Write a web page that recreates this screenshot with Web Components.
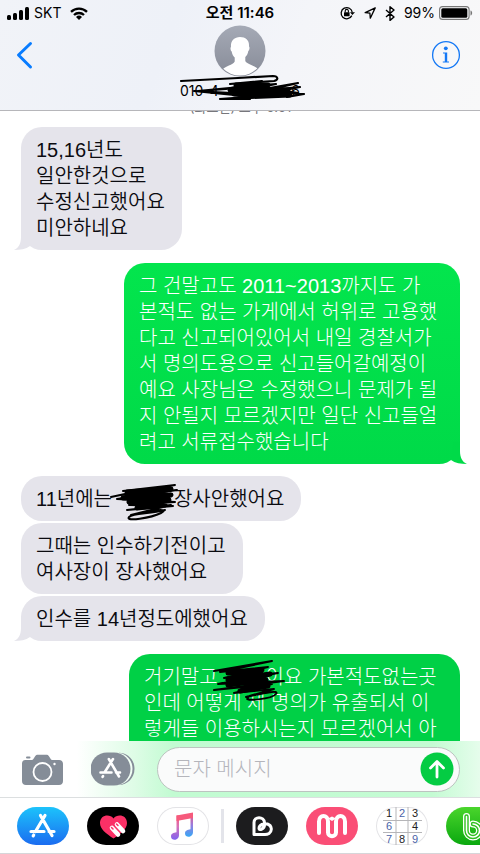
<!DOCTYPE html>
<html lang="ko">
<head>
<meta charset="utf-8">
<meta name="viewport" content="width=device-width, initial-scale=1">
<title>문자 메시지</title>
<style>
  html, body { height: 100%; }
  body {
    margin: 0;
    background: #fff;
    color: #0b0b10;
    font-family: Inter, "Noto Sans CJK KR", sans-serif;
  }
</style>
</head>
<body>
<phone-screen>
  <chat-header slot="header">
    <status-bar slot="status" carrier="SKT" time="오전 11:46" battery="99%"></status-bar>
  </chat-header>
  <chat-stamp>(화요일) 오후 5:51</chat-stamp>
  <chat-bubble tail gap="none">15,16년도<br>일안한것으로<br>수정신고했어요<br>미안하네요</chat-bubble>
  <chat-bubble sent tail>그 건말고도 2011~2013까지도 가<br>본적도 없는 가게에서 허위로 고용했<br>다고 신고되어있어서 내일 경찰서가<br>서 명의도용으로 신고들어갈예정이<br>예요 사장님은 수정했으니 문제가 될<br>지 안될지 모르겠지만 일단 신고들얼<br>려고 서류접수했습니다</chat-bubble>
  <chat-bubble gap="turn">11년에는<ink-scribble kind="a"></ink-scribble>장사안했어요</chat-bubble>
  <chat-bubble gap="tight">그때는 인수하기전이고<br>여사장이 장사했어요</chat-bubble>
  <chat-bubble tail gap="tight">인수를 14년정도에했어요</chat-bubble>
  <chat-bubble sent deep>거기말고<ink-scribble kind="b"></ink-scribble>이요 가본적도없는곳<br>인데 어떻게 제 명의가 유출되서 이<br>렇게들 이용하시는지 모르겠어서 아<br>직도</chat-bubble>
  <message-compose slot="compose"></message-compose>
  <app-drawer slot="apps"></app-drawer>
</phone-screen>

<script>
function element(name, html) {
  customElements.define(name, class extends HTMLElement {
    constructor() {
      super();
      const t = document.createElement('template');
      t.innerHTML = html;
      this.attachShadow({ mode: 'open' }).append(t.content.cloneNode(true));
    }
    connectedCallback() {
      this.shadowRoot.querySelectorAll('[data-attr]').forEach(n => {
        n.textContent = this.getAttribute(n.dataset.attr) || '';
      });
    }
  });
}

element('phone-screen', `
<style>
  :host { display: flex; flex-direction: column; height: 100vh; overflow: hidden; }
  main { flex: 1; min-height: 0; overflow: hidden; display: flex; flex-direction: column; padding: 0 20px 0 21px; }
</style>
<slot name="header"></slot>
<main><slot></slot></main>
<slot name="compose"></slot>
<slot name="apps"></slot>`);

element('status-bar', `
<style>
  :host { display: grid; grid-template-columns: 1fr auto 1fr; align-items: center; height: 26px; padding: 0 7px; font-size: 14px; line-height: 20px; color: #000; }
  div { display: flex; align-items: center; }
  .end { justify-content: flex-end; gap: 9px; }
  .start { gap: 5px; }
  time { font-weight: 600; font-size: 15px; }
  .wifi { margin-left: 4px; }
  .battery { margin-left: -5px; }
  svg { display: block; flex: none; }
</style>
<div class="start">
  <svg width="22" height="13" viewBox="0 0 22 13"><rect y="8" width="4" height="5" rx="1.5"/><rect x="6" y="6" width="4" height="7" rx="1.5"/><rect x="12" y="3" width="4" height="10" rx="1.5"/><rect x="18" width="4" height="13" rx="1.5"/></svg>
  <span data-attr="carrier"></span>
  <svg class="wifi" width="18" height="13" viewBox="0 0 18 13"><g fill="none" stroke="#000" stroke-width="2.3"><path d="M1 4.9a11.4 11.4 0 0 1 16 0"/><path d="M4 8a7.2 7.2 0 0 1 10 0"/></g><path d="M9 13 6 10a4.3 4.3 0 0 1 6 0z"/></svg>
</div>
<time data-attr="time"></time>
<div class="end">
  <svg width="15" height="14" viewBox="0 0 15 14"><path d="M11.8 9.6A5.6 5.6 0 1 1 12.3 6.5" fill="none" stroke="#000" stroke-width="1.3"/><path d="M10 6.2h5L12.4 9z"/><rect x="4" y="6.2" width="5.6" height="4" rx=".5"/><path d="M5.2 6.5V5a1.6 1.6 0 0 1 3.2 0v1.5" fill="none" stroke="#000" stroke-width="1.1"/></svg>
  <svg width="12" height="12" viewBox="0 0 12 12"><path d="M11.2.9 1.2 5.7l4.7.5.4 5z" fill="none" stroke="#000" stroke-width="1.3" stroke-linejoin="round"/></svg>
  <svg width="10" height="15" viewBox="0 0 10 15"><path d="M1 4l8 7-4 3.4V.7L9 4l-8 7" fill="none" stroke="#000" stroke-width="1.4" stroke-linejoin="round"/></svg>
  <span data-attr="battery"></span>
  <svg class="battery" width="34" height="14" viewBox="0 0 34 14"><rect x=".6" y=".6" width="29.5" height="12.8" rx="3" fill="none" stroke="#777" stroke-width="1.1"/><rect x="2.3" y="2.3" width="26" height="9.4" rx="1.5"/><path d="M31.5 4.5c2.2.5 2.2 4.500 0 5z" fill="#777"/></svg>
</div>`);

element('chat-header', `
<style>
  :host { display: block; border-bottom: 1px solid #b6b6ba; background: linear-gradient(110deg, #f1f3f8, #eef1f8 35%, #f4f5f9 60%, #f8f8f9); }
  nav { display: grid; grid-template-columns: 1fr auto 1fr; height: 84px; padding: 0 15px; }
  button { all: unset; cursor: pointer; display: block; height: 30px; margin-top: 14px; }
  .info { justify-self: end; margin-right: 4px; }
  svg { display: block; overflow: visible; }
  .who { display: grid; justify-items: center; align-content: start; position: relative; width: 124px; }
  .num { display: flex; justify-content: space-between; width: 120px; font-size: 14px; line-height: 18px; margin: 4px 0 0; font-weight: 400; color: #000; }
  .ink { position: absolute; left: 0; top: 46px; }
</style>
<slot name="status"></slot>
<nav>
  <button aria-label="뒤로"><svg width="20" height="30" viewBox="0 0 20 30"><path d="M15.500 3.500 3.500 15l12 12" fill="none" stroke="#087cff" stroke-width="3" stroke-linecap="round" stroke-linejoin="round"/></svg></button>
  <div class="who">
    <svg width="52" height="52" viewBox="0 0 52 52"><defs><linearGradient id="g" x1="0" y1="0" x2="0" y2="1"><stop offset="0" stop-color="#a5aab6"/><stop offset="1" stop-color="#878b97"/></linearGradient><clipPath id="c"><circle cx="26" cy="25" r="24.500"/></clipPath></defs><circle cx="26" cy="25" r="25.500" fill="url(#g)"/><path clip-path="url(#c)" d="M26 11c-6 0-9.500 4-9 10-.9.6-.6 3.500.7 4.500.4 3.200 1.700 4.600 3 6v4c-1.500 3.500-9.700 4.500-12.700 8.500L14 52h26l4.500-8.500c-3-4-11.700-5-13.200-8.500v-4c1.300-1.400 2.600-2.800 3-6 1.300-1 1.600-3.900.7-4.500.5-6-3-9.500-9-9.500z" fill="#fff"/></svg>
    <h1 class="num"><span>010-4</span><span>6</span></h1>
    <svg class="ink" width="128" height="32" viewBox="0 0 128 32" fill="none" stroke="#000" stroke-linecap="round" stroke-linejoin="round"><path stroke-width="2.200" d="M3 9 60 6l35-2c5 0 6 4 1 5L52 12 84 9 48 17 20 19 62 15 98 12 54 21 16 19 66 24 110 22 42 27 72 27M70 20l50-9-30 7 32-3-25 5 29 2-17 3M84 15l36 6"/><path stroke-width="5" d="M58 13 90 13 52 18 110 18 56 22 112 23 62 25"/></svg>
  </div>
  <button class="info" aria-label="정보"><svg width="30" height="30" viewBox="0 0 30 30" fill="#1478f5"><circle cx="15" cy="15" r="13.400" fill="none" stroke="#1478f5" stroke-width="1.300"/><circle cx="14.800" cy="8.300" r="1.900"/><path d="M12 12.500h4.200v9h1.800v1h-6.200v-1h2v-8H12z"/></svg></button>
</nav>`);

element('chat-stamp', `
<style>
  :host { display: block; flex: none; height: 16px; text-align: center; font-size: 13px; line-height: 16px; color: #77777c; }
  p { margin: -12px 0 0; }
</style>
<p><slot></slot></p>`);

element('chat-bubble', `
<style>
  :host { display: block; position: relative; flex: none; align-self: flex-start; box-sizing: border-box; margin-top: 13px; padding: 10px 17px 9px 15px; border-radius: 21px; background: #e5e4eb; font: 350 20px/26px "Liberation Sans", "Noto Sans CJK KR", sans-serif; white-space: nowrap; --tail: #e5e4eb; }
  :host([gap="none"]) { margin-top: 0; }
  :host([gap="turn"]) { margin-top: 12px; }
  :host([gap="tight"]) { margin-top: 2px; }
  :host([sent]) { align-self: flex-end; min-width: 336px; color: #fff; font-weight: 300; background: linear-gradient(#03e54d, #00da48); --tail: #00da48; }
  :host([deep]) { min-width: 331px; background: #00d046; }
  svg { display: none; position: absolute; left: -7px; bottom: 0; fill: var(--tail); }
  :host([tail]) svg { display: block; }
  :host([sent]) svg { left: auto; right: -7px; transform: scaleX(-1); }
</style>
<svg width="20" height="22" viewBox="0 0 20 22" aria-hidden="true"><path d="M7 0v9c0 6-2 11-7 13 6 0 12-1 16-4L14 0z"/></svg>
<slot></slot>`);

customElements.define('ink-scribble', class extends HTMLElement {
  connectedCallback() {
    const a = this.getAttribute('kind') === 'a';
    const thin = a
      ? 'M2 15 16 12 60 4 14 9 66 3 12 13 68 8 8 17 66 20 20 23 64 24 18 28 62 23 22 33C42 28 62 26 52 31 42 36 16 40 20 35 24 31 40 32 56 28'
      : 'M2 11 60 1 8 12 56 7 12 18 66 13 6 24 72 21 2 30 60 24 22 33 62 29 34 37C48 34 68 29 64 34 60 39 30 42 36 38';
    const thick = a
      ? 'M18 10 62 7 14 16 62 13 20 20 60 18 28 26 56 23'
      : 'M16 13 50 10 16 20 58 14 16 25 54 20 28 31 56 26';
    this.attachShadow({ mode: 'open' }).innerHTML = `
<style>
  :host { display: inline-block; position: relative; width: ${a ? 62 : 48}px; height: 20px; vertical-align: middle; }
  svg { position: absolute; overflow: visible; left: ${a ? -3 : -6}px; top: -9px; }
</style>
<svg width="76" height="42" viewBox="0 0 76 42" fill="none" stroke="#000" stroke-linecap="round" stroke-linejoin="round" aria-hidden="true"><path stroke-width="2" d="${thin}"/><path stroke-width="5" d="${thick}"/></svg>`;
  }
});

element('message-compose', `
<style>
  :host { display: block; border-bottom: 1px solid #dcdfe0; background: linear-gradient(90deg, #fff 16%, #defce6 28%, #c2fbd2 36%, #c4fbd3 90%, #e6fdec 100%); }
  form { display: flex; align-items: center; height: 56px; padding: 0 20px; }
  button { all: unset; cursor: pointer; display: block; flex: none; }
  svg { display: block; }
  .apps { margin: 0 22px 0 27px; }
  .field { flex: 1; min-width: 0; display: flex; align-items: center; box-sizing: border-box; height: 45px; border: 1px solid #bcc4c0; border-radius: 23px; padding: 0 5px 0 16px; background: #fafbfb; }
  input { all: unset; flex: 1; width: 0; min-width: 0; font: 300 20px/28px "Liberation Sans", "Noto Sans CJK KR", sans-serif; }
  input::placeholder { color: #b4b5bb; opacity: 1; }
</style>
<form>
  <button type="button" aria-label="카메라"><svg width="44" height="34" viewBox="0 0 44 34"><path d="M5.500 8H11c1.500 0 2-.4 2.700-1.500l1.600-2.500c.6-.9 1.400-1.300 2.500-1.300h8.500c1.100 0 1.900.4 2.500 1.300L30.400 6.500C31 7.600 31.600 8 33 8h6c2.500 0 4 1.500 4 4v17c0 2.500-1.500 4-4 4H6c-2.500 0-4-1.500-4-4V12c0-2.500 1-4 3.500-4z" fill="#858d98"/><rect x="6" y="4.500" width="4.500" height="2" rx="1" fill="#858d98"/><circle cx="22.500" cy="20" r="9" fill="none" stroke="#fff" stroke-width="1.800"/><circle cx="34.500" cy="12" r="1.200" fill="#fff"/></svg></button>
  <button type="button" class="apps" aria-label="앱"><svg width="44" height="34" viewBox="0 0 44 34"><path d="M28 .8c8 0 15.500 6.500 15.500 16S36 33 28 33z" fill="#858d98"/><path d="M26 .8c8 0 15.500 6.500 15.500 16S34 33 26 33z" fill="#f1fff5"/><rect x="-.5" y=".5" width="40" height="33" rx="16.500" fill="#858d98"/><g stroke="#fff" stroke-width="2.600" stroke-linecap="round" fill="none"><path d="M17.800 7 28 24.500M22 7 13.500 20.500M9.500 20.500h11M25 20.500h4M12 24.200l-.4.600"/></g></svg></button>
  <div class="field">
    <input type="text" placeholder="문자 메시지" aria-label="문자 메시지">
    <button type="submit" aria-label="보내기"><svg width="34" height="34" viewBox="0 0 34 34"><circle cx="17" cy="17" r="16.500" fill="#04cc43"/><path d="M17 25V10M10.500 16 17 9.500l6.500 6.500" fill="none" stroke="#fff" stroke-width="2.800" stroke-linecap="round" stroke-linejoin="round"/></svg></button>
  </div>
</form>`);

element('app-pill', `
<style>
  :host { display: block; flex: none; }
  button { all: unset; cursor: pointer; display: block; box-sizing: border-box; width: 52px; height: 38px; border-radius: 19px; overflow: hidden; background: var(--fill, #fff); box-shadow: inset 0 0 0 1px var(--edge, transparent); }
</style>
<button><slot></slot></button>`);

element('app-drawer', `
<style>
  :host { display: flex; align-items: center; gap: 18px; box-sizing: border-box; height: 56px; padding-left: 17px; overflow: hidden; background: #fff; border-bottom: 1px solid #d6d6d9; }
  hr { flex: none; width: 3px; height: 34px; margin: 0 -6px; border: 0; background: #e3e4ea; }
  svg { display: block; }
  text { font: 400 11px "Liberation Sans", sans-serif; }
</style>
<app-pill style="--fill:linear-gradient(#1cc3fb,#1b6cf0)"><svg width="52" height="38" viewBox="0 0 52 38" role="img" aria-label="App Store"><g stroke="#fff" stroke-width="3.200" stroke-linecap="round" fill="none"><path d="M23.500 8.500 35 28.500M28 8.500 18.500 24.500M14 24.500h13M32 24.500h5M16.700 28l-.5.800"/></g></svg></app-pill>
<app-pill style="--fill:#000"><svg width="52" height="38" viewBox="0 0 52 38" role="img" aria-label="Digital Touch"><path d="M26.500 31.500C19 26.500 13 22 13 16c0-8 9.500-9.500 13.500-4.500C30.500 6.500 40 8 40 16c0 6-6 10.500-13.500 15.500z" fill="#fb3066"/><path d="m25 21 6 6.500M30 17.500l6 6.500" stroke="#fff" stroke-width="4.600" stroke-linecap="round"/><path d="m24.500 20.500 1.500 1.500M29.500 17l1.500 1.500" stroke="#fb3066" stroke-width="1.500" stroke-linecap="round"/></svg></app-pill>
<app-pill style="--edge:#e3e3e6"><svg width="52" height="38" viewBox="0 0 52 38" role="img" aria-label="음악"><defs><linearGradient id="m" x1="0" y1="0" x2="0" y2="1"><stop offset="0" stop-color="#fb5576"/><stop offset=".45" stop-color="#d872b8"/><stop offset="1" stop-color="#8063f0"/></linearGradient><linearGradient id="n" x1="0" y1="0" x2="0" y2="1"><stop offset="0" stop-color="#f2577c"/><stop offset=".5" stop-color="#9a7bdd"/><stop offset="1" stop-color="#36a7f6"/></linearGradient></defs><path d="M19.500 8.500H22V28c0 6-8 6-8 1.500 0-3 2.500-3.800 5.500-4.200z" fill="url(#m)"/><path d="M33.500 6H36v19c0 6-8 6-8 1.500 0-3 2.500-3.800 5.500-4.200z" fill="url(#n)"/><path d="M19.500 8.500 36 5.500v5.500l-16.500 3z" fill="#f65a7c"/></svg></app-pill>
<hr>
<app-pill style="--fill:#1c1c1e"><svg width="52" height="38" viewBox="0 0 52 38" role="img" aria-label="Between"><path d="M18 27.500V15.500c0-6.500 10-6.500 10.500 0v2.500c0 4-5.500 6-5.500 3.500 0-4 5-5.500 8.500-4.500 4.500 1.500 5 7 1.500 9.500-1.300.8-2 1-4 1z" fill="none" stroke="#fff" stroke-width="3" stroke-linejoin="round"/></svg></app-pill>
<app-pill style="--fill:#fa4e76"><svg width="52" height="38" viewBox="0 0 52 38" role="img" aria-label="M"><path d="M13 26V14.500c0-7.500 9-7.500 9 0v11c0 5 8 5 8 0v-11c0-7.500 9-7.500 9 0V26" fill="none" stroke="#fff" stroke-width="4" stroke-linecap="round"/><path d="M22 11.500 26 14l4-2.500-4-2z" fill="#fff"/></svg></app-pill>
<app-pill style="--edge:#e3e3e6"><svg width="52" height="38" viewBox="0 0 52 38" role="img" aria-label="스도쿠"><path d="M20 0v38M32 0v38M7 13.500h39M7 25.500h39" stroke="#b5b5b8" stroke-width="1"/><g text-anchor="middle" fill="#222"><text x="13" y="10">1</text><text x="26" y="10" fill="#4a63a8">2</text><text x="39" y="10">3</text><text x="13" y="23" fill="#4a63a8">6</text><text x="39" y="23">4</text><text x="13" y="36" fill="#4a63a8">7</text><text x="26" y="36">8</text><text x="39" y="36" fill="#4a63a8">9</text></g></svg></app-pill>
<app-pill style="--fill:linear-gradient(#4ad52c,#0aa80f)"><svg width="52" height="38" viewBox="0 0 52 38" role="img" aria-label="B"><g fill="none"><path d="M20.500 9.500v14a6.500 6.500 0 1 0 6.500-6.500" stroke="#fff" stroke-width="7" stroke-linecap="round"/><path d="M20.500 9.500v14a6.500 6.500 0 1 0 6.500-6.500" stroke="#2fc01e" stroke-width="4.400" stroke-linecap="round"/><path d="M20.500 9.500v14a6.500 6.500 0 1 0 6.500-6.500" stroke="#fff" stroke-width="1.600" stroke-linecap="round"/></g></svg></app-pill>`);
</script>
</body>
</html>
